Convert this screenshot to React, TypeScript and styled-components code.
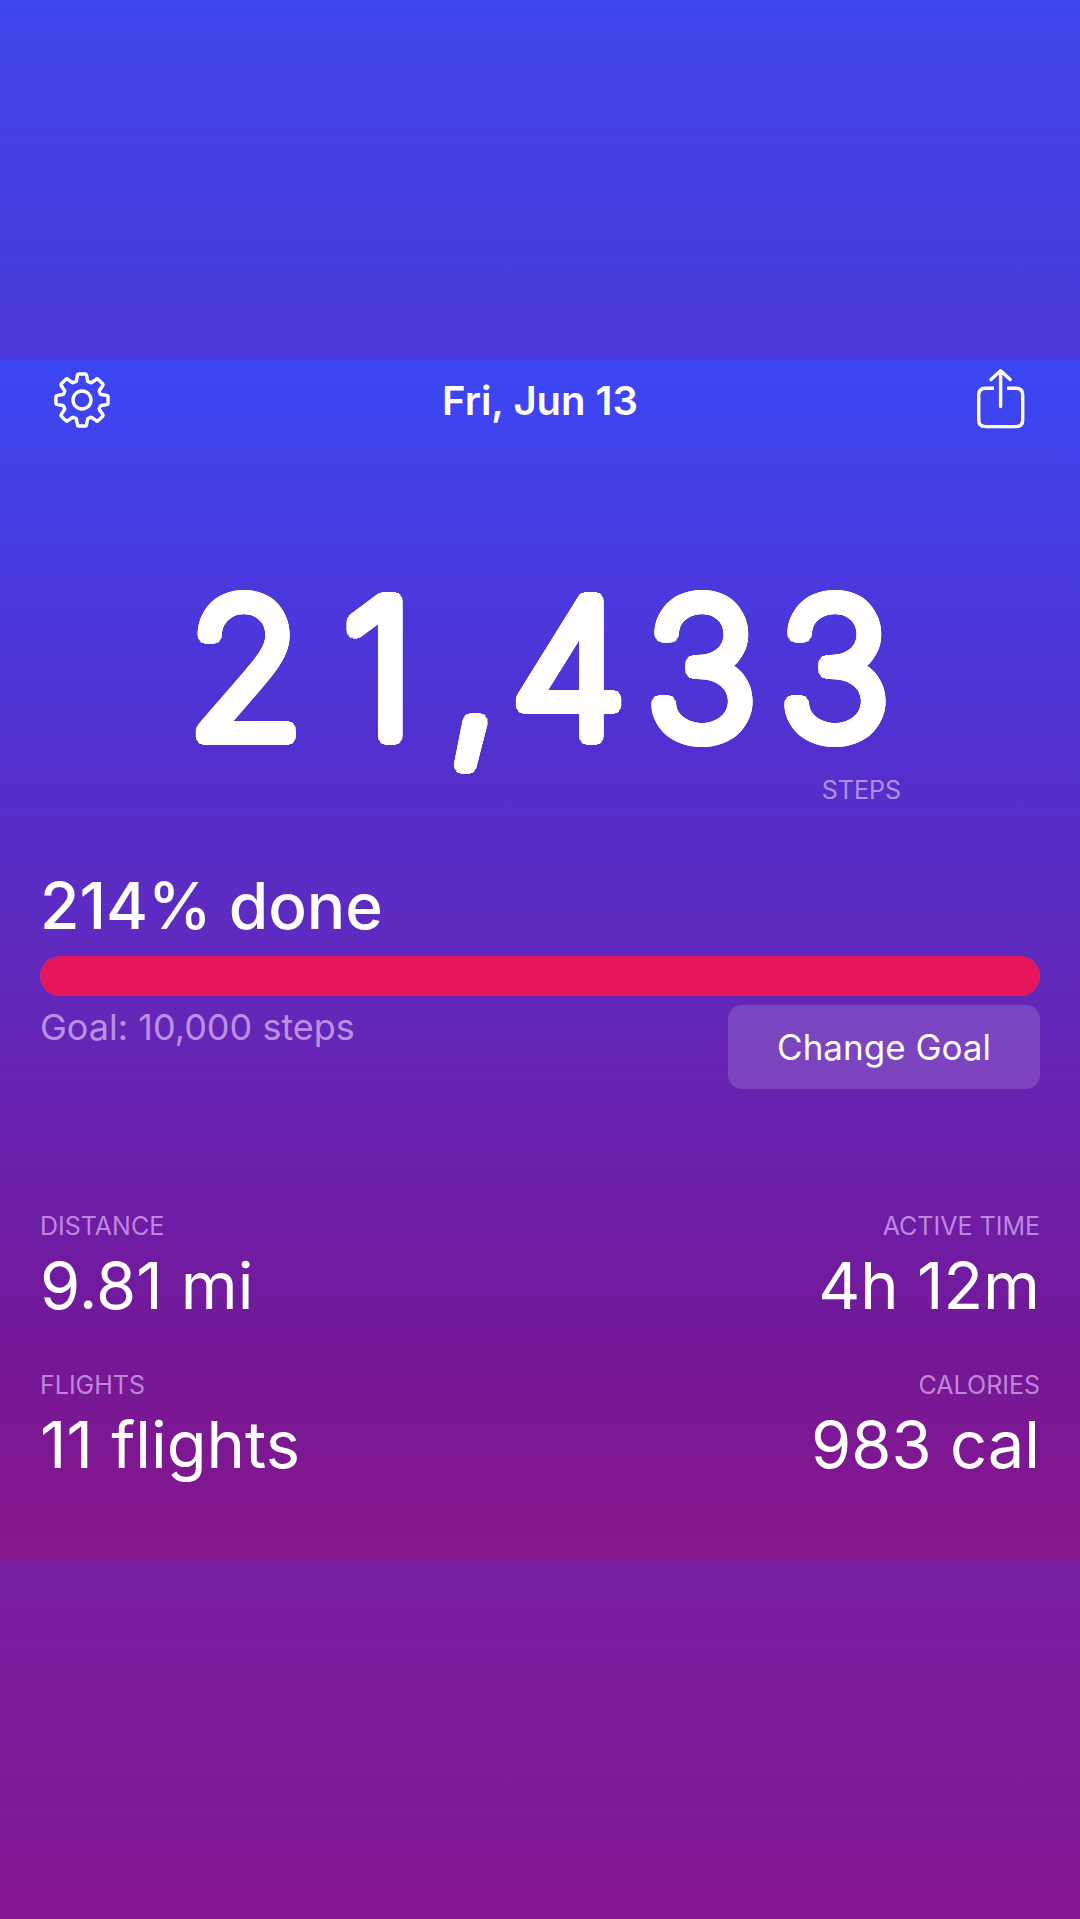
import React from "react";
import styled, { createGlobalStyle } from "styled-components";

const GlobalStyle = createGlobalStyle`
  *, *::before, *::after { box-sizing: border-box; }
  body {
    margin: 0;
    background: #82168f;
    color: #fff;
    font-family: Inter, "Liberation Sans", sans-serif;
  }
  button { font: inherit; color: inherit; border: 0; cursor: pointer; }
`;

const Page = styled.div`
  min-height: 100vh;
  display: flex;
  flex-direction: column;
  justify-content: center;
  background: linear-gradient(180deg, #3f46ee 0%, #4b39d6 19%, #6528b4 50%, #771fa3 81%, #82168f 100%);
`;

const Panel = styled.main`
  padding-bottom: 74px;
  background: linear-gradient(
    180deg,
    #3b47f4 0%,
    #4340e8 10%,
    #5230cf 32%,
    #602abd 50%,
    #6a20ae 64%,
    #751896 84%,
    #88178c 100%
  );
`;

const Header = styled.header`
  height: 80px;
  padding: 0 54px;
  display: flex;
  align-items: center;
  justify-content: space-between;
`;

const Title = styled.h1`
  margin: 0;
  padding-top: 2px;
  font-size: 40px;
  line-height: 48px;
  font-weight: 600;
`;

const IconButton = styled.button`
  width: 56px;
  height: 64px;
  padding: 0;
  background: none;
  display: grid;
  place-items: center;
`;

const Icon = styled.svg`
  width: 56px;
  height: 64px;
  display: block;
  overflow: visible;
  fill: none;
  stroke: #fff;
  stroke-width: 3.4;
  stroke-linecap: round;
  stroke-linejoin: round;
`;

const Count = styled.section`
  width: fit-content;
  margin: 124px auto 60px;
  display: flex;
  flex-direction: column;
  align-items: flex-end;
`;

// Rings of hard shadows thicken the light strokes and round their ends.
const ring = (radius: number, count: number) =>
  Array.from({ length: count }, (_, i) => {
    const a = (i * 2 * Math.PI) / count;
    return `${(radius * Math.cos(a)).toFixed(2)}px ${(radius * Math.sin(a)).toFixed(2)}px 0 #fff`;
  }).join(", ");

const CountValue = styled.div`
  display: flex;
  font-size: 188px;
  line-height: 210px;
  font-weight: 200;
  text-shadow: ${ring(8, 32)}, ${ring(4, 12)};
`;

const Digit = styled.span<{ $narrow: boolean }>`
  width: ${(p) => (p.$narrow ? 57 : 133)}px;
  display: flex;
  justify-content: center;
`;

const Label = styled.div`
  font-size: 25px;
  line-height: 32px;
  color: rgba(230, 190, 255, 0.68);
`;

const Body = styled.div`
  padding: 0 40px;
`;

const Value = styled.div`
  font-size: 65px;
  line-height: 80px;
`;

const Percent = styled(Value)`
  font-size: 64px;
  font-weight: 500;
`;

const Track = styled.div`
  height: 40px;
  margin: 10px 0 9px;
  border-radius: 20px;
  overflow: hidden;
  background: rgba(255, 255, 255, 0.16);
`;

const Fill = styled.div`
  height: 100%;
  border-radius: 20px;
  background: #e5165a;
`;

const GoalRow = styled.div`
  display: flex;
  justify-content: space-between;
  align-items: flex-start;
`;

const GoalText = styled.div`
  font-size: 36px;
  line-height: 44px;
  color: rgba(230, 200, 255, 0.68);
`;

const GoalButton = styled.button`
  && {
    height: 84px;
    padding: 0 49px;
    border-radius: 14px;
    background: rgba(255, 255, 255, 0.15);
    font-size: 35px;
    line-height: 44px;
  }
`;

const Stats = styled.section`
  margin-top: 121px;
  display: grid;
  grid-template-columns: 1fr 1fr;
  row-gap: 43px;
`;

const Stat = styled.div<{ $align: "left" | "right" }>`
  display: grid;
  row-gap: 4px;
  text-align: ${(p) => p.$align};
`;

const steps = 21433;
const goal = 10000;
const percent = Math.floor((steps / goal) * 100);

const stats = [
  { label: "DISTANCE", value: "9.81 mi" },
  { label: "ACTIVE TIME", value: "4h 12m" },
  { label: "FLIGHTS", value: "11 flights" },
  { label: "CALORIES", value: "983 cal" },
];

// Eight rounded teeth spaced evenly about the centre of the gear.
function gearPath(cx: number, cy: number) {
  const outer = 26.3;
  const inner = 20;
  const points: string[] = [];
  for (let i = 0; i < 8; i++) {
    const mid = (i * 45 - 90) * (Math.PI / 180);
    const at = (r: number, deg: number) => {
      const a = mid + (deg * Math.PI) / 180;
      return `${(cx + r * Math.cos(a)).toFixed(2)} ${(cy + r * Math.sin(a)).toFixed(2)}`;
    };
    points.push(`${i ? "L" : "M"}${at(inner, -16)}`);
    points.push(`L${at(outer - 1.2, -10.5)}Q${at(outer, -10)} ${at(outer, -7.5)}`);
    points.push(`L${at(outer, 7.5)}Q${at(outer, 10)} ${at(outer - 1.2, 10.5)}`);
    points.push(`L${at(inner, 16)}Q${at(inner - 1, 18)} ${at(inner - 0.6, 20)}L${at(inner - 0.6, 25)}Q${at(inner - 1, 27)} ${at(inner, 29)}`);
  }
  return points.join("") + "Z";
}

export default function App() {
  return (
    <>
      <GlobalStyle />
      <Page>
        <Panel>
          <Header>
            <IconButton aria-label="Settings">
              <Icon viewBox="0 0 56 64">
                <path d={gearPath(28, 32)} />
                <circle cx="28" cy="32" r="9" />
              </Icon>
            </IconButton>
            <Title>Fri, Jun 13</Title>
            <IconButton aria-label="Share">
              <Icon viewBox="0 0 56 64">
                <path
                  strokeLinecap="butt"
                  d="M24 20.2H15.5Q8.7 20.2 8.7 27V52Q8.7 58.6 15.5 58.6H46Q52.7 58.6 52.7 52V27Q52.7 20.2 46 20.2H37"
                />
                <path d="M30.6 38.5V3M21 11.5L30.6 2.8L40.2 11.5" />
              </Icon>
            </IconButton>
          </Header>

          <Count>
            <CountValue>
              {steps
                .toLocaleString("en-US")
                .split("")
                .map((char, i) => (
                  <Digit key={i} $narrow={char === ","}>
                    {char}
                  </Digit>
                ))}
            </CountValue>
            <Label>STEPS</Label>
          </Count>

          <Body>
            <Percent>{percent}% done</Percent>
            <Track role="progressbar" aria-label="Daily goal" aria-valuenow={percent}>
              <Fill style={{ width: `${Math.min(percent, 100)}%` }} />
            </Track>
            <GoalRow>
              <GoalText>Goal: {goal.toLocaleString("en-US")} steps</GoalText>
              <GoalButton>Change Goal</GoalButton>
            </GoalRow>

            <Stats>
              {stats.map((stat, i) => (
                <Stat key={stat.label} $align={i % 2 ? "right" : "left"}>
                  <Label>{stat.label}</Label>
                  <Value>{stat.value}</Value>
                </Stat>
              ))}
            </Stats>
          </Body>
        </Panel>
      </Page>
    </>
  );
}
